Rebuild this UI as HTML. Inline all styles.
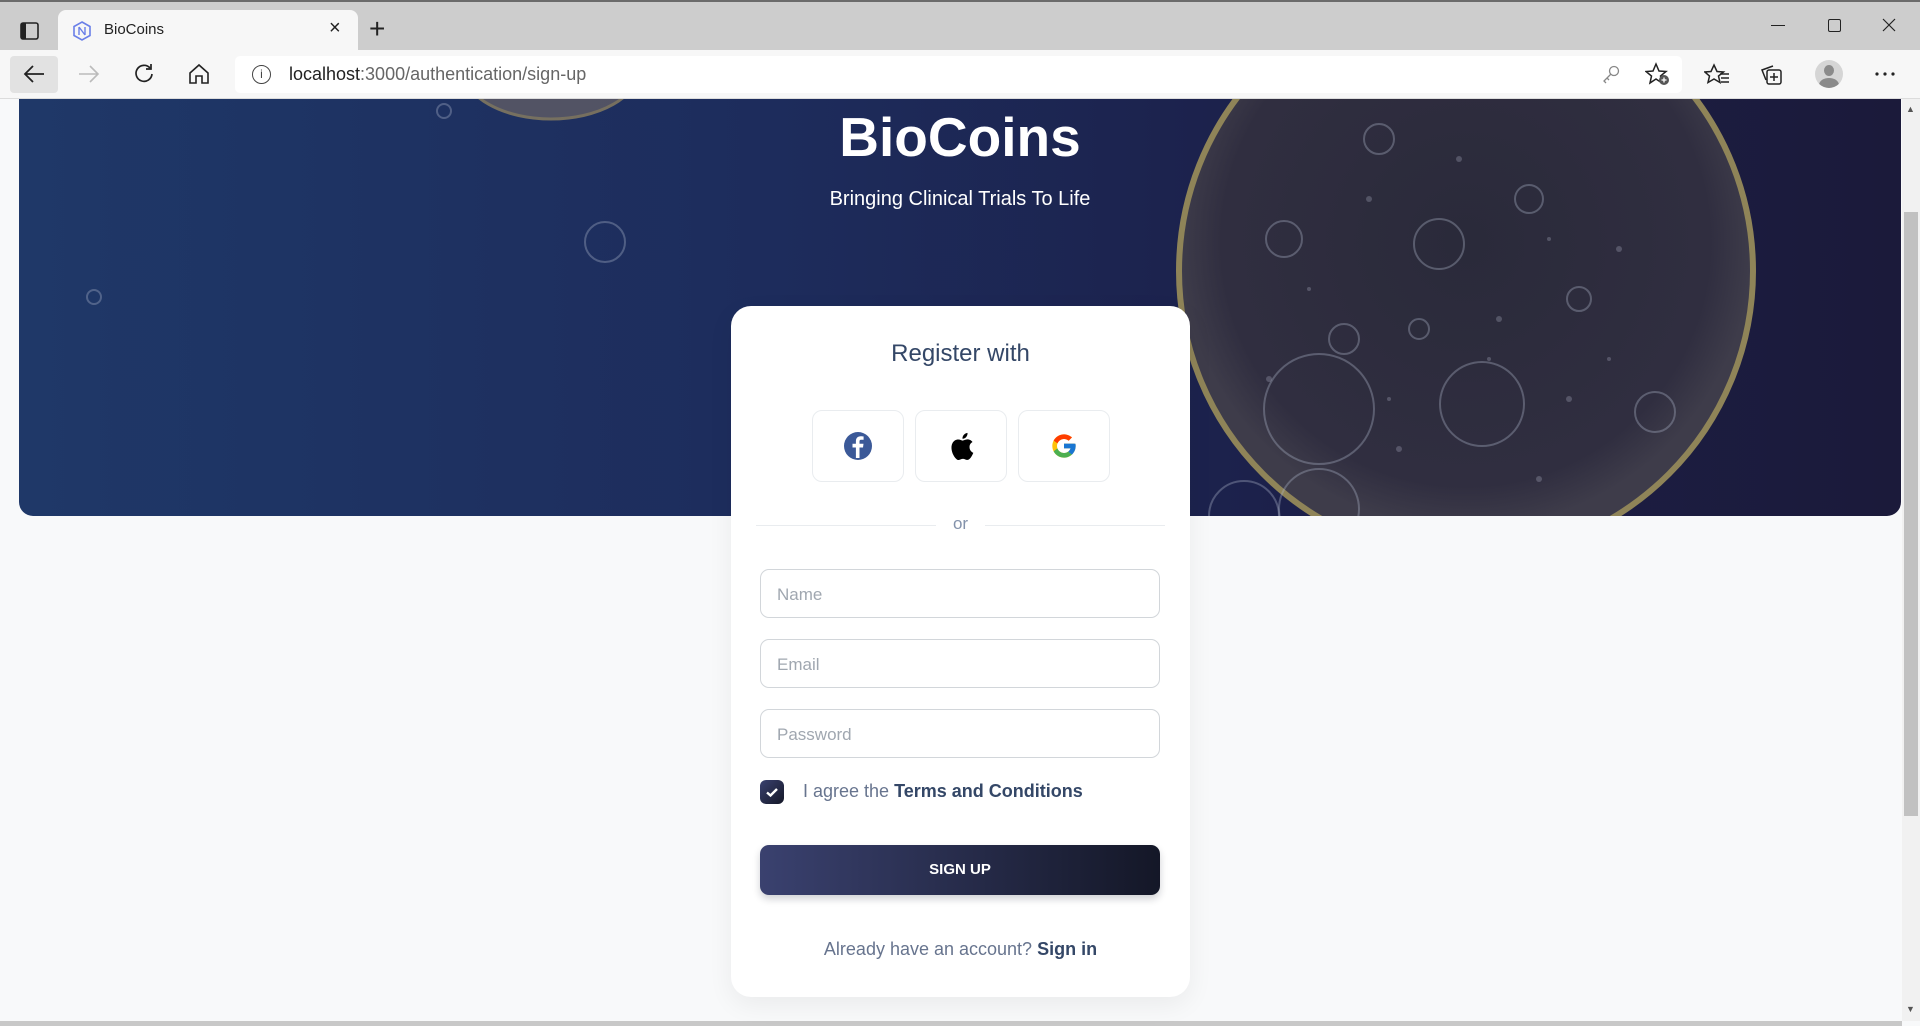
<!DOCTYPE html>
<html><head><meta charset="utf-8"><style>
*{margin:0;padding:0;box-sizing:border-box}
body{width:1920px;height:1026px;overflow:hidden;background:#f8f9fa;font-family:"Liberation Sans",sans-serif;position:relative}
.abs{position:absolute}
#tabbar{left:0;top:0;width:1920px;height:50px;background:#cdcdcd;border-top:2px solid #6b6b6b}
#tab{left:58px;top:10px;width:300px;height:40px;background:#f7f7f7;border-radius:8px 8px 0 0}
#toolbar{left:0;top:50px;width:1920px;height:49px;background:#f7f7f7;border-bottom:1px solid #dcdcdc}
#addr{left:235px;top:56px;width:1447px;height:37px;background:#fff;border-radius:5px}
#back{left:10px;top:56px;width:48px;height:37px;background:#e2e2e2;border-radius:4px}
#hero{left:19px;top:99px;width:1882px;height:417px;border-radius:0 0 14px 14px;overflow:hidden;background:linear-gradient(90deg,#1f3868 0%,#1d2c5c 40%,#1c1f48 70%,#1b1a3a 100%)}
#scroll{left:1902px;top:99px;width:18px;height:922px;background:#f1f1f1}
#thumb{left:1904px;top:212px;width:14px;height:604px;background:#c1c1c1}
#card{left:731px;top:306px;width:459px;height:691px;background:#fff;border-radius:20px;box-shadow:0 8px 26px rgba(0,0,0,.06)}
.sb{position:absolute;top:104px;width:92px;height:72px;border:1px solid #e9ecef;border-radius:10px;display:flex;align-items:center;justify-content:center}
.inp{position:absolute;left:29px;width:400px;height:49px;border:1px solid #d2d6da;border-radius:9px;font-size:17px;color:#a0a7b0;padding:15px 0 0 16px}
</style></head><body>
<div id="tabbar" class="abs"></div>
<div id="tab" class="abs"></div>
<svg class="abs" style="left:20px;top:22px" width="19" height="18"><rect x="1" y="1" width="17" height="16" rx="2" fill="none" stroke="#222" stroke-width="1.6"/><rect x="1" y="1" width="5" height="16" fill="#222"/></svg>
<svg class="abs" style="left:73px;top:21px" width="18" height="20"><path d="M9 1 L17 5.5 L17 14.5 L9 19 L1 14.5 L1 5.5Z" fill="none" stroke="#6a7fe8" stroke-width="1.6"/><path d="M6 6 L12 14 M6 14 V6 M12 6 V14" stroke="#6a7fe8" stroke-width="1.4" fill="none"/></svg>
<div class="abs" style="left:104px;top:21px;font-size:15px;color:#222">BioCoins</div>
<div class="abs" style="left:329px;top:17px;font-size:20px;color:#222">×</div>
<div class="abs" style="left:369px;top:13px;font-size:28px;color:#222;font-weight:300">+</div>
<div class="abs" style="left:1771px;top:25px;width:14px;height:1px;background:#222"></div>
<div class="abs" style="left:1828px;top:19px;width:13px;height:13px;border:1.3px solid #222;border-radius:2px"></div>
<svg class="abs" style="left:1882px;top:18px" width="14" height="14"><path d="M1 1L13 13M13 1L1 13" stroke="#222" stroke-width="1.2"/></svg>
<div id="toolbar" class="abs"></div>
<div id="back" class="abs"></div>
<svg class="abs" style="left:22px;top:64px" width="24" height="20"><path d="M22 10H3M11 2L3 10L11 18" fill="none" stroke="#222" stroke-width="1.8"/></svg>
<svg class="abs" style="left:77px;top:64px" width="24" height="20"><path d="M2 10H21M13 2L21 10L13 18" fill="none" stroke="#bbb" stroke-width="1.6"/></svg>
<svg class="abs" style="left:133px;top:63px" width="22" height="22"><path d="M17 5A8 8 0 1 0 19 11" fill="none" stroke="#222" stroke-width="1.7"/><path d="M18 1V6H13" fill="none" stroke="#222" stroke-width="1.7"/></svg>
<svg class="abs" style="left:188px;top:63px" width="22" height="22"><path d="M2 10L11 2L20 10V20H14V13H8V20H2Z" fill="none" stroke="#222" stroke-width="1.6"/></svg>
<div id="addr" class="abs"></div>
<div class="abs" style="left:252px;top:65px;width:19px;height:19px;border:1.3px solid #444;border-radius:50%;font-size:12px;text-align:center;line-height:17px;color:#444">i</div>
<div class="abs" style="left:289px;top:64px;font-size:18px;color:#222">localhost<span style="color:#666">:3000/authentication/sign-up</span></div>
<svg class="abs" style="left:1601px;top:64px" width="20" height="20"><circle cx="13" cy="7" r="4.5" fill="none" stroke="#888" stroke-width="1.3"/><path d="M10 10L3 17L5 19M6 14L8 16" fill="none" stroke="#888" stroke-width="1.3"/></svg>
<svg class="abs" style="left:1645px;top:62px" width="26" height="24"><path d="M11 2L14 9L21 9.5L15.5 14L17 21L11 17L5 21L6.5 14L1 9.5L8 9Z" fill="none" stroke="#222" stroke-width="1.5"/><circle cx="19" cy="18" r="5" fill="#555"/><path d="M19 15.5V20.5M16.5 18H21.5" stroke="#fff" stroke-width="1.3"/></svg>
<svg class="abs" style="left:1704px;top:63px" width="26" height="22"><path d="M10 2L13 8.5L19.5 9L14.5 13L16 19.5L10 16L4 19.5L5.5 13L0.8 9L7 8.5Z" fill="none" stroke="#222" stroke-width="1.5"/><path d="M16 11H25M17 15H25M17 19H25" stroke="#222" stroke-width="1.5"/></svg>
<svg class="abs" style="left:1760px;top:62px" width="24" height="24"><path d="M6 18L2 8L13 4" fill="none" stroke="#222" stroke-width="1.5"/><rect x="7" y="8" width="14" height="14" rx="2" fill="none" stroke="#222" stroke-width="1.5"/><path d="M14 11V19M10 15H18" stroke="#222" stroke-width="1.5"/></svg>
<div class="abs" style="left:1815px;top:60px;width:28px;height:28px;border-radius:50%;background:#d5d5d5;overflow:hidden"><div style="position:absolute;left:9px;top:5px;width:10px;height:11px;border-radius:50%;background:#8a8a8a"></div><div style="position:absolute;left:4px;top:18px;width:20px;height:14px;border-radius:50%;background:#8a8a8a"></div></div>
<svg class="abs" style="left:1874px;top:72px" width="22" height="4"><circle cx="3" cy="2" r="1.6" fill="#222"/><circle cx="11" cy="2" r="1.6" fill="#222"/><circle cx="19" cy="2" r="1.6" fill="#222"/></svg>

<div id="hero" class="abs">
<svg width="1882" height="417" style="position:absolute;left:0;top:0">
<defs><radialGradient id="dish" cx="50%" cy="45%" r="50%"><stop offset="0" stop-color="#2a2a3a"/><stop offset=".85" stop-color="#302e40"/><stop offset="1" stop-color="#3e3c4a"/></radialGradient></defs>
<ellipse cx="532" cy="-30" rx="88" ry="50" fill="#5f5c66" opacity=".8" stroke="#8d8060" stroke-width="3"/>
<circle cx="1447" cy="172" r="287" fill="url(#dish)" stroke="#8f8458" stroke-width="6"/>
<g fill="none" stroke="#b0b6cc" stroke-opacity=".35" stroke-width="2">
<circle cx="1300" cy="310" r="55"/><circle cx="1463" cy="305" r="42"/><circle cx="1636" cy="313" r="20"/><circle cx="1265" cy="140" r="18"/><circle cx="1420" cy="145" r="25"/><circle cx="1360" cy="40" r="15"/><circle cx="1510" cy="100" r="14"/><circle cx="1325" cy="240" r="15"/><circle cx="1560" cy="200" r="12"/><circle cx="1400" cy="230" r="10"/>
<circle cx="586" cy="143" r="20"/><circle cx="57" cy="-22" r="10"/><circle cx="425" cy="12" r="7"/><circle cx="1300" cy="410" r="40"/><circle cx="1225" cy="417" r="35"/><circle cx="1740" cy="-12" r="8"/><circle cx="75" cy="198" r="7"/></g>
<g fill="#c8cde0" opacity=".25"><circle cx="1350" cy="100" r="3"/><circle cx="1480" cy="220" r="3"/><circle cx="1550" cy="300" r="3"/><circle cx="1380" cy="350" r="3"/><circle cx="1600" cy="150" r="3"/><circle cx="1250" cy="280" r="3"/><circle cx="1440" cy="60" r="3"/><circle cx="1520" cy="380" r="3"/><circle cx="1290" cy="190" r="2"/><circle cx="1590" cy="260" r="2"/><circle cx="1470" cy="260" r="2"/><circle cx="1370" cy="300" r="2"/><circle cx="1530" cy="140" r="2"/></g>
</svg>
<div style="position:absolute;left:0;width:1882px;text-align:center;color:#fff;font-weight:bold;font-size:55px;line-height:72px;top:2px">BioCoins</div>
<div style="position:absolute;left:0;width:1882px;top:89px;text-align:center;color:#fff;font-size:20px">Bringing Clinical Trials To Life</div>
</div>
<div id="scroll" class="abs"></div>
<div id="thumb" class="abs"></div>
<div class="abs" style="left:1906px;top:104px;font-size:9px;color:#555">▲</div>
<div class="abs" style="left:1906px;top:1004px;font-size:9px;color:#555">▼</div>
<div class="abs" style="left:0;top:1021px;width:1902px;height:5px;background:#c8c8c8"></div>

<div id="card" class="abs">
<div style="position:absolute;top:34px;width:100%;text-align:center;font-size:24px;color:#344767">Register with</div>
<div class="sb" style="left:81px"><svg width="28" height="28"><circle cx="14" cy="14" r="14" fill="#3b5998"/><path d="M15.5 26V15.5H19L19.5 11.8H15.5V9.6C15.5 8.5 15.8 7.8 17.4 7.8H19.6V4.5C19.2 4.4 18 4.3 16.7 4.3C13.8 4.3 11.9 6 11.9 9.2V11.8H8.5V15.5H11.9V26Z" fill="#fff"/></svg></div>
<div class="sb" style="left:184px"><svg width="26" height="30" viewBox="0 0 26 30"><path d="M21.5 16C21.5 12.5 24.3 11.2 24.5 11C22.9 8.7 20.5 8.4 19.7 8.4C17.6 8.2 15.6 9.6 14.6 9.6C13.5 9.6 11.9 8.4 10.2 8.5C7.9 8.5 5.8 9.8 4.6 11.9C2.2 16 4 22.2 6.3 25.6C7.5 27.2 8.8 29 10.6 29C12.2 28.9 12.9 27.9 15 27.9C17 27.9 17.6 29 19.3 28.9C21.1 28.9 22.3 27.2 23.4 25.6C24.7 23.7 25.3 21.9 25.3 21.8C25.2 21.8 21.5 20.3 21.5 16ZM18.2 6C19.1 4.9 19.7 3.4 19.5 1.9C18.2 2 16.7 2.8 15.8 3.9C15 4.8 14.3 6.3 14.5 7.8C15.9 7.9 17.3 7.1 18.2 6Z" fill="#000"/></svg></div>
<div class="sb" style="left:287px"><svg width="28" height="28" viewBox="0 0 48 48"><path d="M43.6 20.1H42V20H24v8h11.3C33.7 32.7 29.2 36 24 36c-6.6 0-12-5.4-12-12s5.4-12 12-12c3.1 0 5.8 1.2 8 3l5.7-5.7C34 6.1 29.3 4 24 4 13 4 4 13 4 24s9 20 20 20 20-9 20-20c0-1.300-.1-2.600-.4-3.900z" fill="#FFC107"/><path d="M6.3 14.7l6.6 4.8C14.7 15.1 19 12 24 12c3.1 0 5.8 1.2 8 3l5.7-5.7C34 6.1 29.3 4 24 4 16.3 4 9.7 8.3 6.3 14.7z" fill="#FF3D00"/><path d="M24 44c5.2 0 9.9-2 13.4-5.2l-6.2-5.2C29.2 35.1 26.7 36 24 36c-5.2 0-9.6-3.3-11.3-7.9l-6.5 5C9.5 39.6 16.2 44 24 44z" fill="#4CAF50"/><path d="M43.6 20.1H42V20H24v8h11.3c-.8 2.2-2.2 4.2-4.1 5.6l6.2 5.2C37 39.2 44 34 44 24c0-1.3-.1-2.6-.4-3.9z" fill="#1976D2"/></svg></div>
<div style="position:absolute;left:25px;top:219px;width:180px;height:1px;background:#e9ecef"></div>
<div style="position:absolute;left:254px;top:219px;width:180px;height:1px;background:#e9ecef"></div>
<div style="position:absolute;top:208px;width:100%;text-align:center;font-size:17px;color:#8392ab">or</div>
<div class="inp" style="top:263px">Name</div>
<div class="inp" style="top:333px">Email</div>
<div class="inp" style="top:403px">Password</div>
<div style="position:absolute;left:29px;top:474px;width:24px;height:24px;border-radius:6px;background:linear-gradient(135deg,#3a416f,#141727)"><svg width="24" height="24"><path d="M7 12.5L10.5 15.5L17 9" fill="none" stroke="#fff" stroke-width="2.4"/></svg></div>
<div style="position:absolute;left:72px;top:475px;font-size:18px;color:#67748e">I agree the <b style="color:#344767">Terms and Conditions</b></div>
<div style="position:absolute;left:29px;top:539px;width:400px;height:50px;border-radius:9px;background:linear-gradient(90deg,#3a416f,#141727);box-shadow:0 4px 8px rgba(20,23,39,.2);color:#fff;font-weight:bold;font-size:15px;text-align:center;line-height:50px">SIGN UP</div>
<div style="position:absolute;top:633px;width:100%;text-align:center;font-size:18px;color:#67748e">Already have an account? <b style="color:#344767">Sign in</b></div>
</div>
</body></html>
